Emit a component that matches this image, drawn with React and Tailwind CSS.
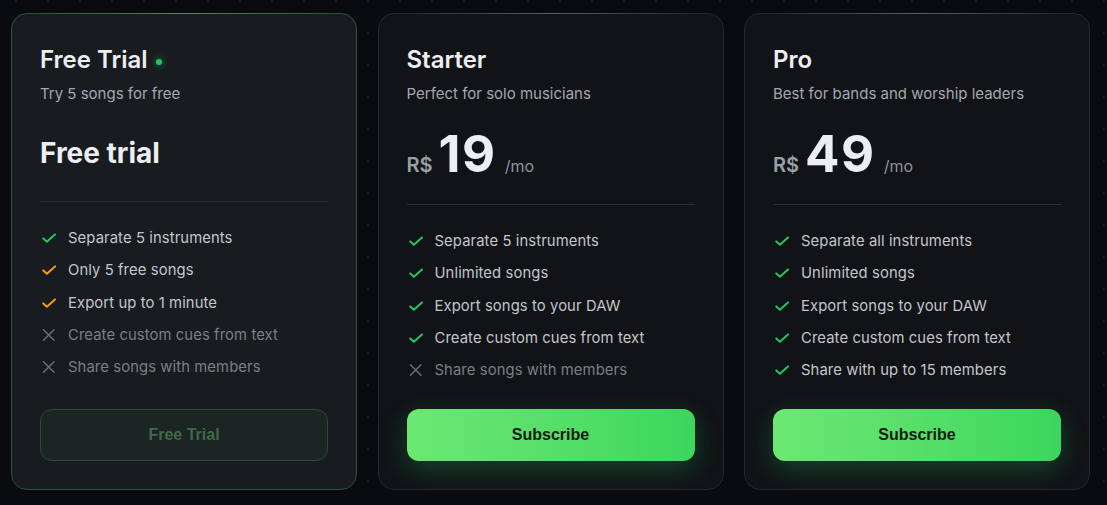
import React from 'react'

const font = { fontFamily: 'Inter, "Noto Sans", sans-serif' }

// Iconos de la lista
const CheckIcon = ({ color }) => (
  <svg width="16" height="16" viewBox="0 0 16 16" fill="none" className="shrink-0">
    <path d="M3.3 8.4L6.9 11.7L15 4.4" stroke={color} strokeWidth="2" strokeLinecap="round" strokeLinejoin="round" />
  </svg>
)

const XIcon = () => (
  <svg width="16" height="16" viewBox="0 0 16 16" fill="none" className="shrink-0">
    <path d="M3.5 2.8L14 13.2M14 2.8L3.5 13.2" stroke="#6b7078" strokeWidth="1.4" strokeLinecap="round" />
  </svg>
)

const plans = [
  {
    id: 'free',
    name: 'Free Trial',
    desc: 'Try 5 songs for free',
    features: [
      ['ok', 'Separate 5 instruments'],
      ['warn', 'Only 5 free songs'],
      ['warn', 'Export up to 1 minute'],
      ['no', 'Create custom cues from text'],
      ['no', 'Share songs with members'],
    ],
  },
  {
    id: 'starter',
    name: 'Starter',
    desc: 'Perfect for solo musicians',
    price: '19',
    features: [
      ['ok', 'Separate 5 instruments'],
      ['ok', 'Unlimited songs'],
      ['ok', 'Export songs to your DAW'],
      ['ok', 'Create custom cues from text'],
      ['no', 'Share songs with members'],
    ],
  },
  {
    id: 'pro',
    name: 'Pro',
    desc: 'Best for bands and worship leaders',
    price: '49',
    features: [
      ['ok', 'Separate all instruments'],
      ['ok', 'Unlimited songs'],
      ['ok', 'Export songs to your DAW'],
      ['ok', 'Create custom cues from text'],
      ['ok', 'Share with up to 15 members'],
    ],
  },
]

const Feature = ({ kind, text }) => (
  <li className="flex items-center gap-3 text-[14.8px] leading-[20px] tracking-[0.1px]">
    {kind === 'ok' && <CheckIcon color="#22c55e" />}
    {kind === 'warn' && <CheckIcon color="#f59e0b" />}
    {kind === 'no' && <XIcon />}
    <span className={kind === 'no' ? 'text-[#7a7f87]' : 'text-[#c3c7cd]'}>{text}</span>
  </li>
)

const PlanCard = ({ plan }) => {
  const isFree = plan.id === 'free'
  return (
    <div
      className={`relative flex w-[346px] h-[477px] flex-col rounded-2xl border px-[28px] pt-[30px] pb-[28px] ${
        isFree ? 'border-[#2a5634] bg-[#181c20]' : 'border-[#24272c] bg-[#111317]'
      }`}
    >
      {/* brillo superior */}
      <div className="absolute left-6 right-6 top-[-1px] h-px bg-gradient-to-r from-transparent via-white/25 to-transparent" />

      <div className="flex items-center gap-2">
        <h3 className="text-[24px] leading-[32px] font-semibold text-[#eceef1]">{plan.name}</h3>
        {isFree && <span className="mt-1 h-[6px] w-[6px] rounded-full bg-[#22c55e] shadow-[0_0_6px_rgba(34,197,94,0.8)]" />}
      </div>
      <p className="mt-[8px] text-[15px] leading-[20px] text-[#a3a8b0]">{plan.desc}</p>

      {isFree ? (
        <div className="mt-[29px] text-[28px] leading-[40px] font-bold text-[#eceef1]">Free trial</div>
      ) : (
        <div className="mt-[26px] flex items-baseline h-[48px]">
          <span className="text-[20px] font-semibold text-[#9aa0a8]">R$</span>
          <span className="ml-[6px] text-[51px] leading-[48px] font-bold tracking-[1.5px] text-[#eceef1]">{plan.price}</span>
          <span className="ml-[8px] text-[16px] text-[#8e949c]">/mo</span>
        </div>
      )}

      <div className={`${isFree ? 'mt-[28px]' : 'mt-[26px]'} border-t border-[#2a2e34]`} />

      <ul className="mt-[26px] flex flex-col gap-[12.3px]">
        {plan.features.map(([kind, text]) => (
          <Feature key={text} kind={kind} text={text} />
        ))}
      </ul>

      <div className="mt-auto">
        {isFree ? (
          <button
            className="h-[52px] w-full rounded-xl border border-[#2c4a34] bg-[#1c2424] text-[16px] font-bold text-[#3f6a49]"
            style={{ fontFamily: '"Liberation Sans", Arial, sans-serif' }}
          >
            Free Trial
          </button>
        ) : (
          <button
            className="h-[52px] w-full rounded-xl bg-gradient-to-r from-[#6ce874] to-[#3bd65e] text-[16px] font-bold text-[#0c1a0f] shadow-[0_8px_26px_rgba(34,197,94,0.28)]"
            style={{ fontFamily: '"Liberation Sans", Arial, sans-serif' }}
          >
            Subscribe
          </button>
        )}
      </div>
    </div>
  )
}

export default function App() {
  return (
    <div
      className="min-h-screen w-full bg-[#0a0b0e] bg-[radial-gradient(circle,#181b20_1px,transparent_1.5px)] bg-[size:32px_32px] bg-[position:0px_-15px]"
      style={font}
    >
      <div className="flex gap-[20.5px] pl-[11px] pt-[13px]">
        {plans.map((p) => (
          <PlanCard key={p.id} plan={p} />
        ))}
      </div>
    </div>
  )
}
